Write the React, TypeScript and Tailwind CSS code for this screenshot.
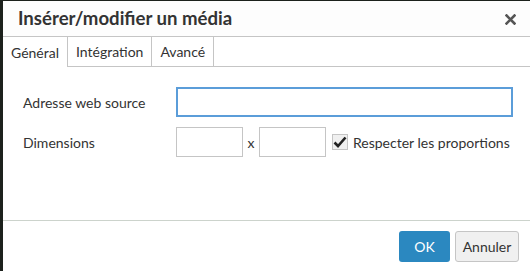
import { useState } from 'react'

const tabs = ['Général', 'Intégration', 'Avancé']

export default function App() {
  const [active, setActive] = useState(0)

  return (
    <div
      className="flex h-[271px] w-[530px] bg-[#1c211c] pl-[3px] pt-[1px] text-[#333]"
      style={{ fontFamily: 'Lato, "Open Sans", sans-serif' }}
    >
      <div className="flex flex-1 flex-col bg-white">
        <div className="flex h-[36px] items-center justify-between border-b border-[#c5c5c5] bg-[#fdfdfd] pl-[15px] pr-[14px]">
          <h1 className="text-[18.6px] font-bold leading-none text-[#333]">Insérer/modifier un média</h1>
          <svg width="11" height="11" viewBox="0 0 11 11" className="mt-[1px]">
            <path d="M1.5 1.5l8 8M9.5 1.5l-8 8" stroke="#555" strokeWidth="2.6" strokeLinecap="square" />
          </svg>
        </div>

        <div className="flex h-[30px]">
          {tabs.map((tab, i) => (
            <button
              key={tab}
              onClick={() => setActive(i)}
              className={
                i === active
                  ? 'border-r border-[#c5c5c5] px-[8px] text-[14px] text-[#333]'
                  : 'border-b border-r border-[#c5c5c5] px-[8px] text-[14px] text-[#333]'
              }
            >
              {tab}
            </button>
          ))}
          <div className="flex-1 border-b border-[#c5c5c5]" />
        </div>

        <div className="flex flex-col gap-[10px] pl-[20px] pr-[17px] pt-[20px]">
          <div className="flex items-center">
            <label className="w-[153px] shrink-0 text-[14px]">Adresse web source</label>
            <input className="h-[30px] min-w-0 flex-1 border-2 border-[#5b9dd9] outline-none" />
          </div>
          <div className="flex items-center whitespace-nowrap">
            <label className="w-[153px] shrink-0 text-[14px]">Dimensions</label>
            <input className="h-[30px] w-[67px] shrink-0 border border-[#c5c5c5] outline-none" />
            <span className="w-[16px] shrink-0 text-center text-[14px]">x</span>
            <input className="h-[30px] w-[67px] shrink-0 border border-[#c5c5c5] outline-none" />
            <span className="ml-[6px] flex h-[16px] w-[16px] shrink-0 items-center justify-center border border-[#c5c5c5] bg-[#f0f0f0]">
              <svg width="14" height="12" viewBox="0 0 14 12">
                <path d="M1.5 6.5l3.5 3.5 7.5-8.5" fill="none" stroke="#222" strokeWidth="2.6" />
              </svg>
            </span>
            <span className="ml-[5px] text-[14px]">Respecter les proportions</span>
          </div>
        </div>

        <div className="mt-auto flex h-[51px] items-start justify-end gap-[5px] border-t border-[#ccd3cc] pr-[11px] pt-[10px]">
          <button className="h-[31px] w-[51px] rounded-[3px] bg-[#2b88c0] text-[14px] text-white">OK</button>
          <button className="h-[31px] w-[64px] rounded-[3px] border border-[#c5c5c5] bg-[#f0f0f0] text-[14px] text-[#333]">
            Annuler
          </button>
        </div>
      </div>
    </div>
  )
}
